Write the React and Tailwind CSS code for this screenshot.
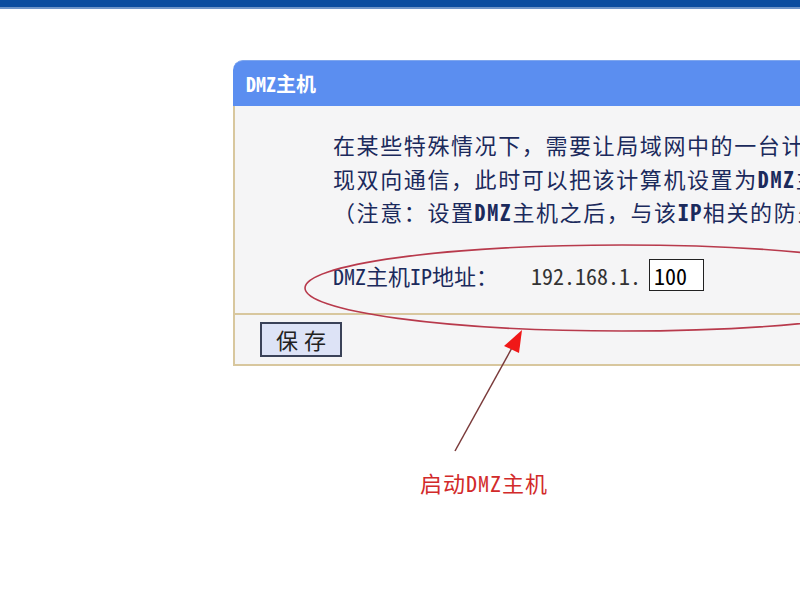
import React from "react";

const cjk = { fontFamily: '"Noto Sans Mono CJK SC", "Noto Sans CJK SC", monospace' };

// ---- marcatura rossa sopra lo screenshot ----
function Annotazione() {
  return (
    <svg className="absolute inset-0 pointer-events-none" width="800" height="600" viewBox="0 0 800 600">
      <ellipse cx="622" cy="288" rx="317" ry="43" fill="none" stroke="#b83a4c" strokeWidth="1.6" />
      <line x1="455" y1="451" x2="513" y2="346" stroke="#7a3a3a" strokeWidth="1.5" />
      <polygon points="522,330 504,346 519,353" fill="#f01818" />
    </svg>
  );
}

export default function App() {
  return (
    <div className="relative w-[800px] h-[600px] overflow-hidden bg-white" style={cjk}>
      <div className="h-[9px] bg-[#0b4d9f] border-b-2 border-[#6f95c8]" />
      <div className="ml-[233px] mt-[51px] w-[640px]">
        <div className="h-[46px] rounded-tl-[10px] bg-[#5b8ef0] border-t border-[#7ea6ee] flex items-center pl-[13px]">
          <span className="text-[20px] text-white leading-none font-semibold">DMZ主机</span>
        </div>
        <div className="bg-[#f5f5f6] border-l-2 border-[#d8c79e]">
          <div className="pl-[98px] pt-[22px] text-[22px] leading-[33.5px] text-[#1b2a5c] whitespace-nowrap tracking-[1.6px]">
            <div>在某些特殊情况下，需要让局域网中的一台计算机完全暴露给广域网，以实</div>
            <div>现双向通信，此时可以把该计算机设置为<span className="font-semibold">DMZ</span>主机。</div>
            <div>（注意：设置<span className="font-semibold">DMZ</span>主机之后，与该<span className="font-semibold">IP</span>相关的防火墙设置将不起作用。）</div>
          </div>
          <div className="flex items-center pl-[98px] pt-[30px] pb-[22px] text-[#1b2a5c] whitespace-nowrap">
            <span className="text-[22px] leading-none w-[198px]">DMZ主机IP地址：</span>
            <span className="text-[22px] leading-none text-[#333]">192.168.1.</span>
            <div className="ml-[8px] w-[55px] h-[32px] bg-white border border-[#222] flex items-center pl-[4px] text-[22px] leading-none text-black">100</div>
          </div>
          <div className="border-t-2 border-[#d8c79e] h-[51px] flex items-center pl-[25px]">
            <button className="w-[82px] h-[35px] bg-[#dde3f6] border-2 border-[#3a4258] text-[22px] leading-none text-[#222] tracking-[6px] pl-[6px]">保存</button>
          </div>
          <div className="border-t-2 border-[#d8c79e]" />
        </div>
      </div>
      <div className="absolute left-[420px] top-[471px] text-[22px] leading-none tracking-[1px] text-[#d22a2a] whitespace-nowrap">启动DMZ主机</div>
      <Annotazione />
    </div>
  );
}
